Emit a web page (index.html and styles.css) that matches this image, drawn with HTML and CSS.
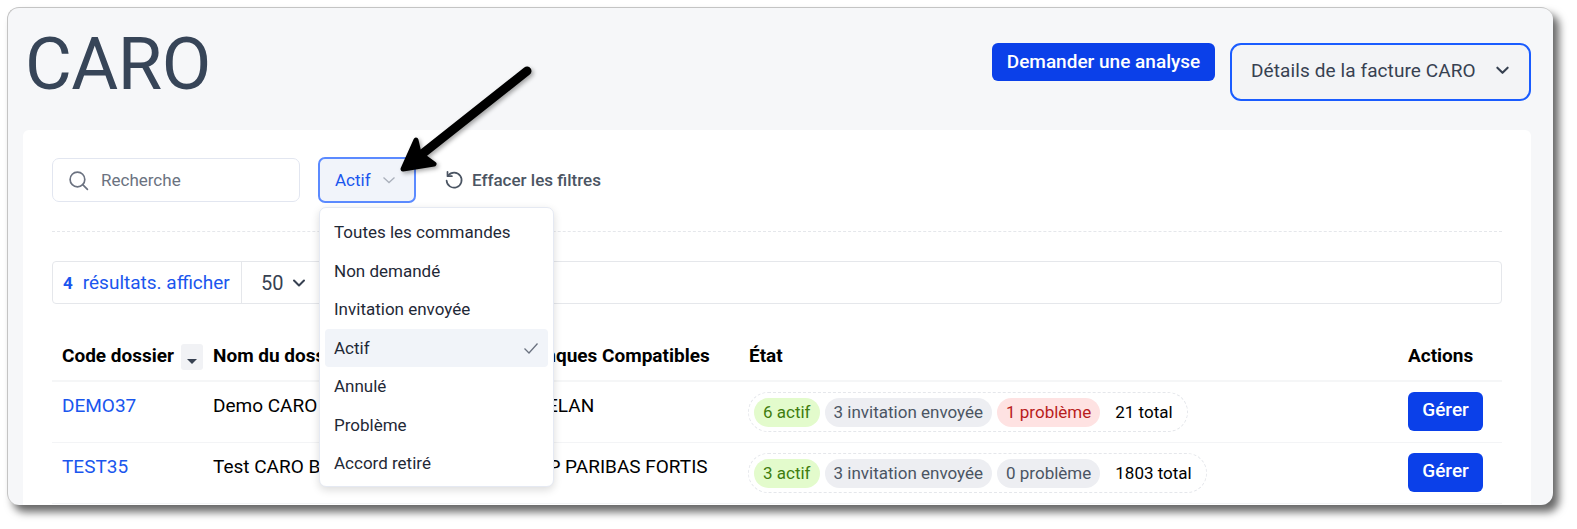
FILE: index.html
```html
<!DOCTYPE html>
<html lang="fr">
<head>
<meta charset="utf-8">
<title>CARO</title>
<link rel="stylesheet" href="styles.css">
</head>
<body>
<main class="window">
  <header class="top">
    <h1 class="title">CARO</h1>
    <div class="top-actions">
      <button class="btn btn-request">Demander une analyse</button>
      <button class="invoice">Détails de la facture CARO
        <svg class="invoice-chevron" viewBox="0 0 16 16" width="15" height="15"><path d="M2.500 5 8 10.500 13.500 5" fill="none" stroke="#374151" stroke-width="2.200" stroke-linecap="round" stroke-linejoin="round"/></svg>
      </button>
    </div>
  </header>
  <section class="panel">
    <div class="filters">
      <label class="search">
        <svg viewBox="0 0 20 20" width="21" height="21"><circle cx="9" cy="9" r="7" fill="none" stroke="#6b7280" stroke-width="1.6"/><path d="M14 14 18.500 18.500" fill="none" stroke="#6b7280" stroke-width="1.6" stroke-linecap="round"/></svg>
        <span class="search-text">Recherche</span>
      </label>
      <div class="select-wrap">
        <button class="status-select">Actif
          <svg viewBox="0 0 14 14" width="14" height="14"><path d="M1.500 4.500 7 9.500 12.500 4.500" fill="none" stroke="#aab0bb" stroke-width="1.300"/></svg>
        </button>
        <ul class="menu">
          <li class="menu-item">Toutes les commandes</li>
          <li class="menu-item">Non demandé</li>
          <li class="menu-item">Invitation envoyée</li>
          <li class="menu-item is-active">Actif
            <svg viewBox="0 0 16 16" width="16" height="16"><path d="M1.500 8.500 6 13 14.500 3.500" fill="none" stroke="#6b7280" stroke-width="1.300"/></svg>
          </li>
          <li class="menu-item">Annulé</li>
          <li class="menu-item">Problème</li>
          <li class="menu-item">Accord retiré</li>
        </ul>
      </div>
      <button class="clear">
        <svg viewBox="0 0 20 20" width="20" height="20"><path d="M4.200 5.500A7.500 7.500 0 1 1 2.600 10.500" fill="none" stroke="#4b5563" stroke-width="1.700" stroke-linecap="round"/><path d="M3.500 1.800V6.200H7.900" fill="none" stroke="#4b5563" stroke-width="1.700" stroke-linecap="round" stroke-linejoin="round"/></svg>
        Effacer les filtres
      </button>
    </div>
    <hr class="rule">
    <div class="results">
      <div class="results-count"><b>4</b><span>résultats. afficher</span></div>
      <div class="results-size">50
        <svg viewBox="0 0 14 14" width="14" height="14"><path d="M2 4.500 7 9.500 12 4.500" fill="none" stroke="#374151" stroke-width="2" stroke-linecap="round" stroke-linejoin="round"/></svg>
      </div>
    </div>
    <div class="table">
      <div class="row head">
        <div class="cell cell-code">Code dossier<span class="sort"><i></i></span></div>
        <div class="cell">Nom du dossier</div>
        <div class="cell">Banques Compatibles</div>
        <div class="cell">État</div>
        <div class="cell">Actions</div>
      </div>
      <div class="row">
        <div class="cell"><a class="code">DEMO37</a></div>
        <div class="cell">Demo CARO</div>
        <div class="cell">CRELAN</div>
        <div class="cell">
          <div class="stats">
            <span class="pill green">6 actif</span>
            <span class="pill gray">3 invitation envoyée</span>
            <span class="pill red">1 problème</span>
            <span class="total">21 total</span>
          </div>
        </div>
        <div class="cell"><button class="btn btn-manage">Gérer</button></div>
      </div>
      <div class="row">
        <div class="cell"><a class="code">TEST35</a></div>
        <div class="cell">Test CARO BNP</div>
        <div class="cell">BNP PARIBAS FORTIS</div>
        <div class="cell">
          <div class="stats">
            <span class="pill green">3 actif</span>
            <span class="pill gray">3 invitation envoyée</span>
            <span class="pill gray">0 problème</span>
            <span class="total">1803 total</span>
          </div>
        </div>
        <div class="cell"><button class="btn btn-manage">Gérer</button></div>
      </div>
    </div>
  </section>
</main>
<svg class="arrow" viewBox="0 0 1577 529" width="1577" height="529">
  <path d="M527 71 412 162" fill="none" stroke="#000" stroke-width="9" stroke-linecap="round"/>
  <path d="M403 169 416 140 419 153 434 164Z" fill="#000" stroke="#000" stroke-width="5" stroke-linejoin="round"/>
</svg>
</body>
</html>
```
FILE: styles.css
```css
* { box-sizing: border-box; }
html, body { margin: 0; height: 529px; overflow: hidden; background: #fff; }
body { font-family: Roboto, "Liberation Sans", sans-serif; color: #000; position: relative; }
button { font-family: inherit; cursor: pointer; }

.window {
  margin: 7px 0 0 7px;
  width: 1546px;
  height: 498px;
  background: #f6f7f9;
  border-radius: 12px;
  border-top: 1px solid #c4c4c4;
  border-left: 1px solid #c4c4c4;
  box-shadow: 6px 7px 8px rgba(0, 0, 0, .6);
  padding: 0 22px 0 15px;
  overflow: hidden;
}

.top { height: 122px; display: flex; justify-content: space-between; align-items: flex-start; }
.title { margin: 15px 0 0 2px; font-size: 72px; line-height: 84px; font-weight: 400; color: #374558; letter-spacing: -.5px; }
.top-actions { display: flex; gap: 15px; margin-top: 35px; }
.btn { border: 0; background: #0b40e9; color: #fff; border-radius: 6px; }
.btn-request { width: 223px; height: 38px; font-size: 19px; font-weight: 500; padding: 0 0 2px; }
.invoice {
  width: 301px; height: 58px; border: 2px solid #1a5cff; border-radius: 11px; background: #f3f4f6;
  color: #374151; font-size: 19px; letter-spacing: .1px; display: flex; align-items: center; justify-content: space-between;
  padding: 0 19px 3px 19px;
}

.panel { background: #fff; border-radius: 6px 6px 0 0; padding: 27px 29px 0; height: 376px; position: relative; }

.filters { display: flex; align-items: center; height: 46px; }
.search {
  width: 248px; height: 44px; border: 1px solid #e2e6f0; border-radius: 7px; display: flex; align-items: center;
  gap: 12px; padding-left: 15px; color: #6b7280; font-size: 17px;
}
.select-wrap { margin-left: 18px; position: relative; }
.status-select {
  width: 98px; height: 46px; border: 2px solid #5b8aff; border-radius: 7px; background: #f1f4fa; color: #1a56ee;
  font-size: 17px; display: flex; align-items: center; gap: 11px; padding: 0 0 0 15px;
}
.menu {
  position: absolute; top: 50px; left: 1px; width: 235px; height: 280px; margin: 0; padding: 5px; list-style: none;
  background: #fff; border: 1px solid #e5e9f2; border-radius: 7px; box-shadow: 0 3px 8px rgba(0, 0, 0, .14); z-index: 2;
}
.menu-item { height: 38.500px; display: flex; align-items: center; justify-content: space-between; padding: 0 9px; font-size: 17px; color: #1f2937; border-radius: 4px; }
.is-active { background: #f1f4f9; }
.clear { margin-left: 28px; border: 0; background: none; padding: 0; display: flex; align-items: center; gap: 8px; font-size: 17px; font-weight: 500; color: #4b5563; }

.rule { margin: 28px 0 0; border: 0; border-top: 1px dashed #e5e7eb; }

.results { margin-top: 29px; height: 43px; border: 1px solid #e5e7eb; border-radius: 4px; display: flex; align-items: center; }
.results-count { width: 189px; height: 100%; border-right: 1px solid #e5e7eb; display: flex; align-items: center; gap: 10px; padding-left: 10px; color: #1a56ee; font-size: 19px; }
.results-count b { font-size: 17px; }
.results-size { display: flex; align-items: center; gap: 9px; padding-left: 19px; font-size: 20px; color: #374151; }

.row { display: grid; grid-template-columns: 151px 310px 226px 659px 1fr; height: 61px; border-bottom: 1px solid #f3f4f6; align-items: start; font-size: 19px; }
.head { height: 78px; align-items: center; font-weight: 700; border-bottom: 2px solid #f5f6f7; padding-top: 26px; white-space: nowrap; }
.cell { padding-left: 10px; }
.cell-code { display: flex; align-items: center; }
.row:not(.head) .cell { padding-top: 10px; line-height: 28px; }
.code { color: #1a56ee; }
.sort { width: 22px; height: 26px; background: #f1f2f5; border-radius: 3px; margin-left: 7px; position: relative; top: 2px; flex: none; }
.sort i { position: absolute; left: 6px; top: 15px; border: 5px solid transparent; border-top-color: #374151; border-bottom: 0; }
.stats { display: flex; width: fit-content; align-items: center; height: 40px; margin-left: -1px; border: 1px dashed #e5e7eb; border-radius: 20px; padding: 0 14px 0 5px; gap: 5px; white-space: nowrap; }
.pill { height: 29px; line-height: 29px; border-radius: 15px; padding: 0 9px; font-size: 17px; }
.green { background: #e3fbcc; color: #3f7d0f; }
.gray { background: #edeef2; color: #4b5563; }
.red { background: #fee2e2; color: #b91c1c; }
.total { margin-left: 10px; font-size: 17px; }
.btn-manage { width: 75px; height: 39px; font-size: 19px; font-weight: 500; padding: 0 0 4px; line-height: 24px; }

.arrow { position: absolute; left: 0; top: 0; pointer-events: none; filter: drop-shadow(2px 2px 2px rgba(0, 0, 0, .35)); z-index: 5; }
```
